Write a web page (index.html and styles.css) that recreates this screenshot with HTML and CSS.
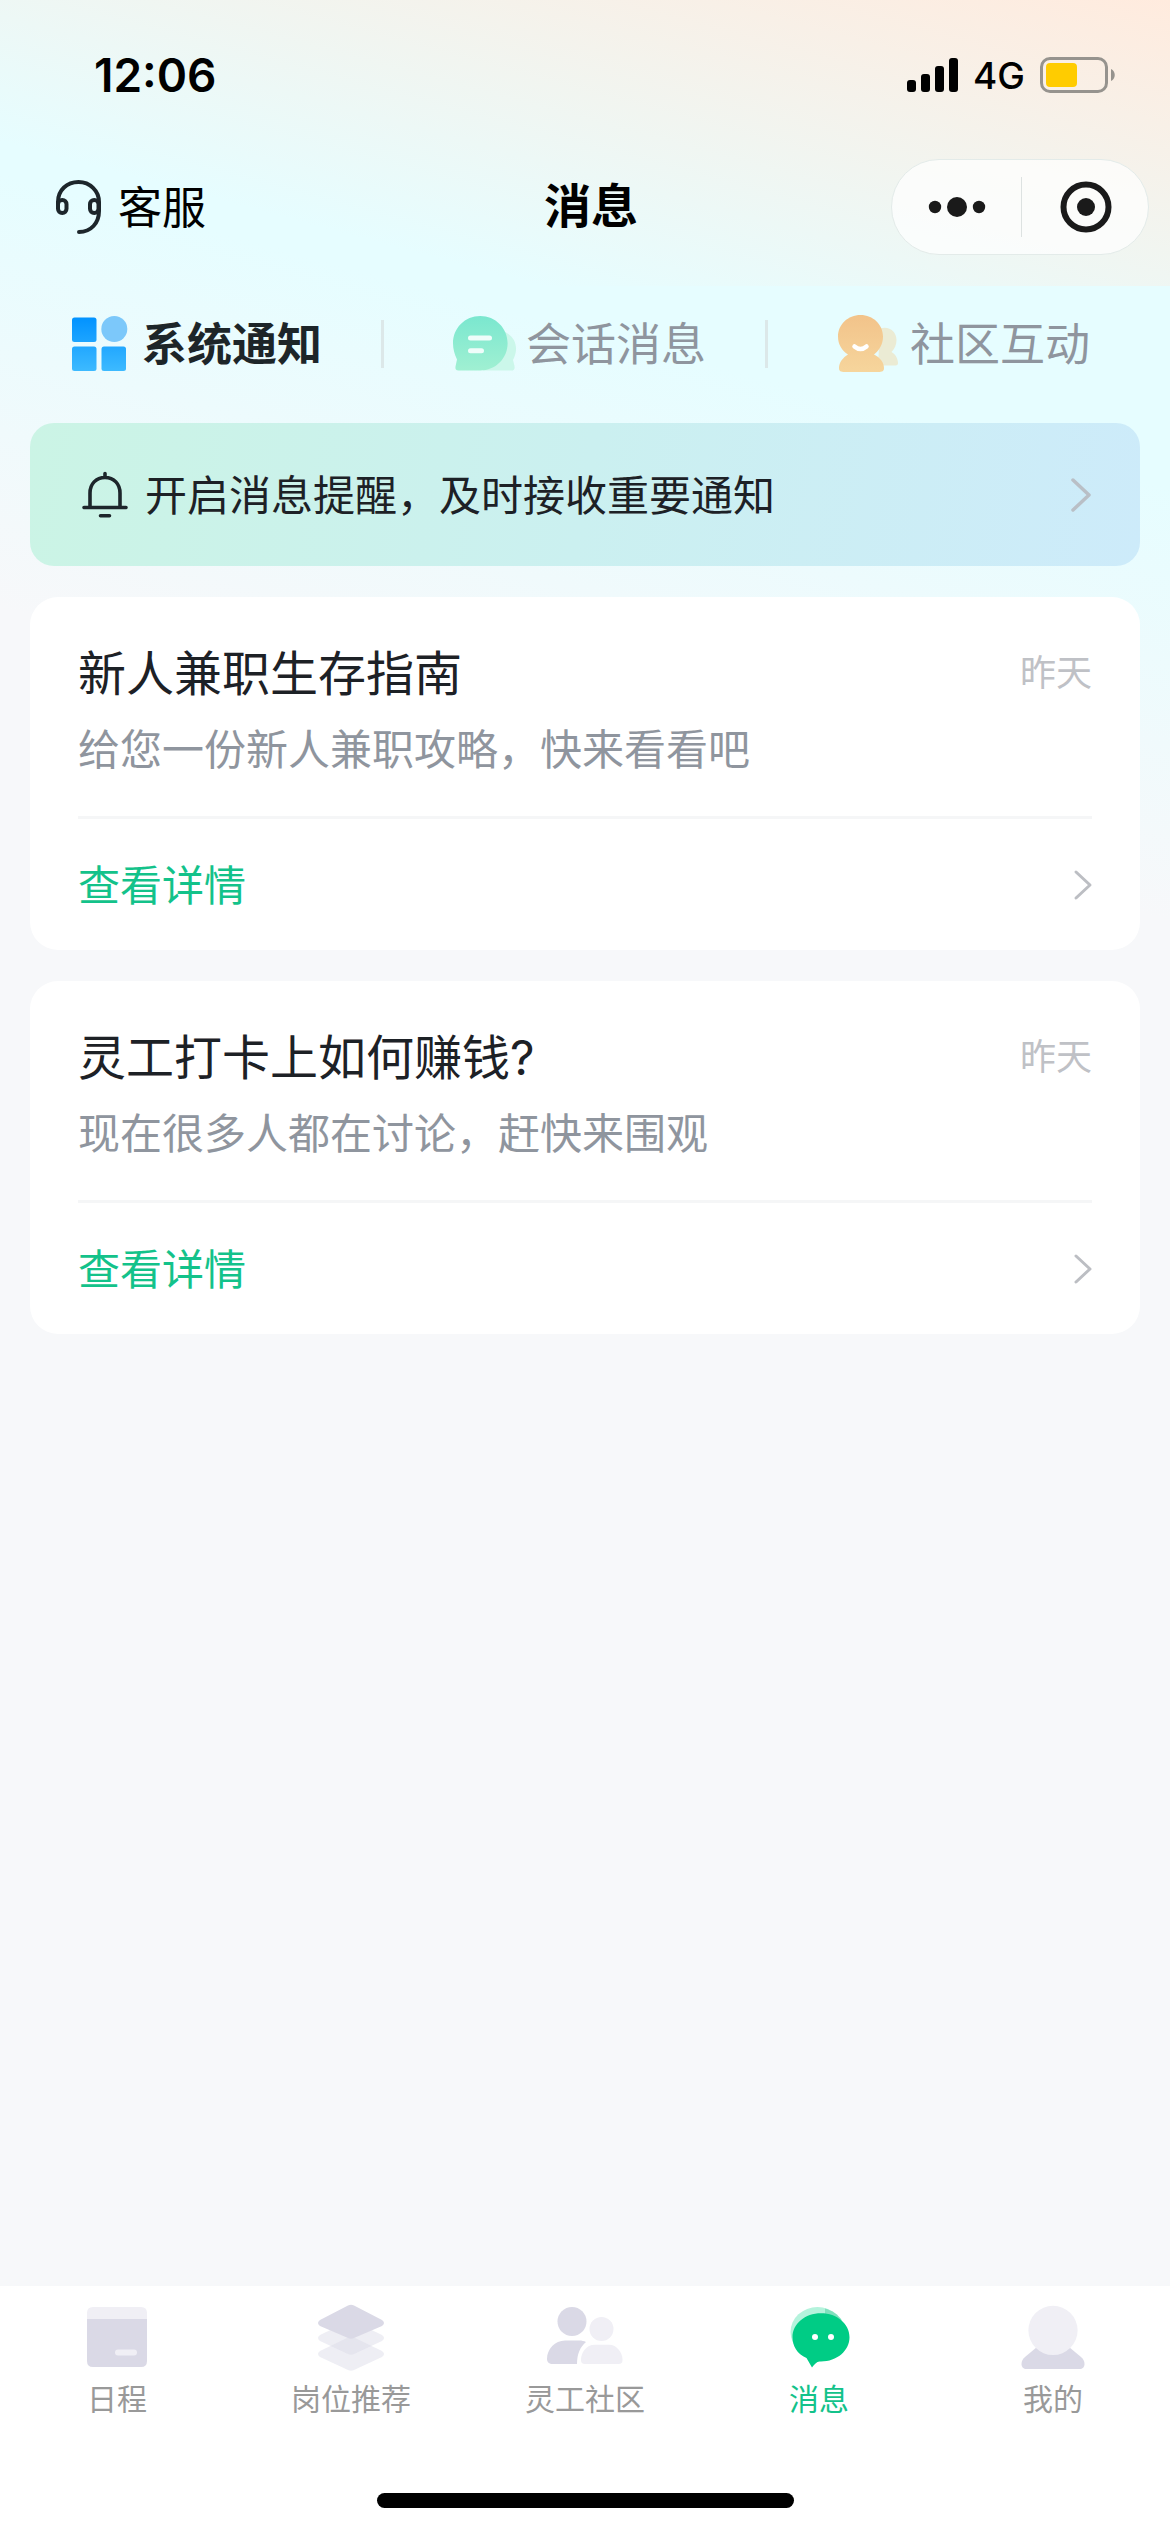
FILE: index.html
```html
<!DOCTYPE html>
<html lang="zh-CN">
<head>
<meta charset="utf-8">
<title>消息</title>
<link rel="stylesheet" href="styles.css">
</head>
<body>
<div class="screen">
  <header class="header">
    <div class="status">
      <span class="time">12:06</span>
      <div class="signals">
        <svg class="bars" width="52" height="34" viewBox="0 0 52 34"><rect x="0" y="22" width="9" height="12" rx="3"/><rect x="14" y="16" width="9" height="18" rx="3"/><rect x="28" y="8" width="9" height="26" rx="3"/><rect x="42" y="0" width="9" height="34" rx="3"/></svg>
        <span class="net">4G</span>
        <svg class="battery" width="76" height="36" viewBox="0 0 76 36"><rect x="1.5" y="1.5" width="65" height="33" rx="8.500" fill="none" stroke="#96938e" stroke-width="3"/><rect x="6" y="6" width="31" height="24" rx="4" fill="#ffcc00"/><path d="M71 12c5 2 5 10 0 12z" fill="#96938e"/></svg>
      </div>
    </div>
    <div class="nav">
      <div class="service">
        <svg width="48" height="56" viewBox="0 0 48 56" fill="none" stroke="#1d262b" stroke-width="4" stroke-linecap="round"><path d="M3 28V23C3 11 12 3 23.500 3S44 12 44 23v9c0 12-8 21-20 21"/><rect x="3" y="21" width="8.500" height="13" rx="4.200"/><rect x="35" y="21" width="8.500" height="13" rx="4.200"/></svg>
        <span>客服</span>
      </div>
      <h1 class="title">消息</h1>
      <div class="capsule">
        <svg class="dots" width="58" height="22" viewBox="0 0 58 22"><circle cx="7" cy="11" r="6.200"/><circle cx="29" cy="11" r="10"/><circle cx="51" cy="11" r="6.200"/></svg>
        <i class="split"></i>
        <svg class="target" width="52" height="52" viewBox="0 0 52 52"><circle cx="26" cy="26" r="22.500" fill="none" stroke="#1a1a1a" stroke-width="6"/><circle cx="26" cy="26" r="9"/></svg>
      </div>
    </div>
  </header>

  <nav class="tabs">
    <div class="tab active">
      <svg width="56" height="55" viewBox="0 0 56 55"><defs><linearGradient id="blue" gradientUnits="userSpaceOnUse" x1="0" y1="0" x2="0" y2="55"><stop stop-color="#0091ff"/><stop offset="1" stop-color="#3dbaff"/></linearGradient></defs><g fill="url(#blue)"><rect x="0" y="1.5" width="24.500" height="24.500" rx="2.500"/><rect x="0" y="30.500" width="24.500" height="24.500" rx="2.500"/><rect x="29.500" y="30.500" width="24.500" height="24.500" rx="2.500"/></g><circle cx="42.300" cy="13" r="13" fill="#7cc8fa"/></svg>
      <span>系统通知</span>
    </div>
    <div class="tab">
      <svg width="64" height="55" viewBox="0 0 64 55"><defs><linearGradient id="mint" x1="0" y1="0" x2="0" y2="1"><stop stop-color="#7ae7cf"/><stop offset="1" stop-color="#a0f0d2"/></linearGradient></defs><path d="M52 16c11 5 14 17 8 28l1.500 6c.5 3-.5 4.500-3 4.500H30z" fill="#cbf7ea"/><path d="M27.300 0c15 0 27.300 12 27.300 27.300S42.500 54.500 27.300 54.500H5.500c-2.500 0-3.500-1.500-3-4l1.500-7C1.500 38 0 33 0 27.300 0 12 12 0 27.300 0z" fill="url(#mint)"/><path d="M17.500 22h19M17.500 34.700h11" stroke="#effdfa" stroke-width="5" stroke-linecap="round"/></svg>
      <span>会话消息</span>
    </div>
    <div class="tab">
      <svg width="61" height="57" viewBox="0 0 61 57"><defs><linearGradient id="sand" gradientUnits="userSpaceOnUse" x1="0" y1="0" x2="0" y2="57"><stop stop-color="#f2c38a"/><stop offset="1" stop-color="#f6d59c"/></linearGradient></defs><path d="M42 13.500c9-3 16.500 3 16.500 11.500 0 5-2 9-5 12 4 2 6.500 7 6.500 11 0 2-1 2.500-4 2.500H40z" fill="#ebebd4"/><path d="M22.500 0C35 0 45 9.500 45 21.500c0 8-4 14-9 18 6 3 10 8 10 13.500 0 3-1.500 4-6 4H7c-4.500 0-6-1-6-4 0-5.500 4-10.500 9-13.500-6-4-10-10-10-18C0 9.500 10 0 22.500 0z" fill="url(#sand)"/><path d="M16.500 31.500q6 5 12 0" fill="none" stroke="#fff" stroke-width="4.500" stroke-linecap="round"/></svg>
      <span>社区互动</span>
    </div>
  </nav>

  <main class="list">
    <section class="banner">
      <svg width="46" height="46" viewBox="0 0 46 46" fill="none" stroke="#1d262b" stroke-width="3.600" stroke-linecap="round"><path d="M23 1.500v4M8 35V21C8 12 14 5.500 23 5.500S38 12 38 21v14M2 35.500h42M18.500 43.800h9"/></svg>
      <span class="banner-text">开启消息提醒，及时接收重要通知</span>
      <svg width="20" height="34" viewBox="0 0 20 34" fill="none" stroke="#b9bfc6" stroke-width="3.500" stroke-linecap="round" stroke-linejoin="round"><path d="M2 2l16 15L2 32"/></svg>
    </section>
    <article class="card">
      <div class="row"><h2>新人兼职生存指南</h2><time>昨天</time></div>
      <p>给您一份新人兼职攻略，快来看看吧</p>
      <a class="more"><span>查看详情</span><svg width="18" height="30" viewBox="0 0 18 30" fill="none" stroke="#bcbec3" stroke-width="3" stroke-linecap="round" stroke-linejoin="round"><path d="M2 2l14 13L2 28"/></svg></a>
    </article>
    <article class="card">
      <div class="row"><h2>灵工打卡上如何赚钱?</h2><time>昨天</time></div>
      <p>现在很多人都在讨论，赶快来围观</p>
      <a class="more"><span>查看详情</span><svg width="18" height="30" viewBox="0 0 18 30" fill="none" stroke="#bcbec3" stroke-width="3" stroke-linecap="round" stroke-linejoin="round"><path d="M2 2l14 13L2 28"/></svg></a>
    </article>
  </main>

  <footer class="tabbar">
    <div class="items">
      <div class="item"><svg width="72" height="72" viewBox="0 0 72 72"><path d="M6 18V11q0-6 6-6h48q6 0 6 6v7z" fill="#f0eff5"/><path d="M6 17h60v42q0 6-6 6H12q-6 0-6-6z" fill="#dad9e6"/><rect x="34" y="47.500" width="22" height="6" rx="3" fill="#f0eff5"/></svg><span>日程</span></div>
      <div class="item"><svg width="72" height="72" viewBox="0 -1 72 72"><g fill="#dad9e6"><path opacity=".45" d="M33 34.500q3-1.500 6 0L67 48q4 3 0 6L39 67q-3 1.500-6 0L5 54q-4-3 0-6z"/><path opacity=".45" d="M33 18.500q3-1.500 6 0L67 32q4 3 0 6L39 51q-3 1.500-6 0L5 38q-4-3 0-6z"/><path d="M33 2.500q3-1.500 6 0L67 17q4 3 0 6L39 35q-3 1.500-6 0L5 23q-4-3 0-6z"/></g></svg><span>岗位推荐</span></div>
      <div class="item"><svg width="76" height="72" viewBox="0 0 76 72"><g fill="#dad9e6"><circle cx="25" cy="19.500" r="14.500"/><path d="M18 38.500h14c3 0 5 .5 7 1.500-6 5-9 12-9 22H6c-4 0-6-2-6-5 0-10 8-18.500 18-18.500z"/></g><g fill="#f0eff5"><circle cx="54.500" cy="27" r="12"/><path d="M48 42.700h14c8 0 13.500 8 13.500 15 0 3-1 4.300-4 4.300H38c-3 0-4-1.300-4-4.300 0-7 5-15 14-15z"/></g></svg><span>灵工社区</span></div>
      <div class="item on"><svg width="72" height="72" viewBox="0 0 72 72"><ellipse cx="34.500" cy="30" rx="27" ry="25" fill="#b4f3dc"/><path d="M42 6.500c7 2 13 6 17 12L42 15z" fill="#7fe0bd"/><path d="M38 11.300c16 0 28.500 10.500 28.500 24S54 59.500 38 59.500c-4 0-5 1-9 6L23.500 56C14 52 9.500 44 9.500 35.300 9.500 21.800 22 11.300 38 11.300z" fill="#00cc85"/><g fill="#fff"><circle cx="32" cy="35" r="3"/><circle cx="48" cy="35" r="3"/></g></svg><span>消息</span></div>
      <div class="item"><svg width="72" height="72" viewBox="0 0 72 72"><path d="M20 45h32l12 10q3.500 3 3.500 7c0 3-2 5-5 5h-53c-3 0-5-2-5-5q0-4 3.500-7z" fill="#dad9e6"/><circle cx="36" cy="28.400" r="24.600" fill="#f0eff5"/></svg><span>我的</span></div>
    </div>
    <div class="home"></div>
  </footer>
</div>
</body>
</html>
```
FILE: styles.css
```css
* { box-sizing: border-box; margin: 0; padding: 0; }
body { font-family: "Noto Sans CJK SC", sans-serif; font-weight: 400; color: #1d2126; }
svg { display: block; flex: none; overflow: visible; }
.screen { width: 1170px; height: 2532px; display: flex; flex-direction: column; background: #f7f8fa linear-gradient(195deg, #e6fdff 0, #e6fdff 470px, #f7f8fa 890px); }
.header { height: 286px; display: flex; flex-direction: column; flex: none; background: linear-gradient(195deg, #ffebde 0, #e6fdff 440px, #e6fdff 470px, #f7f8fa 890px); }
.status { height: 140px; padding: 10px 54px 0 94px; display: flex; align-items: center; justify-content: space-between; }
.time { font: 600 46px/60px Inter, sans-serif; color: #000; }
.signals { display: flex; align-items: center; }
.net { font: 500 37px/44px Inter, sans-serif; color: #000; margin: 2px 15px 0 14px; }
.nav { height: 133px; display: grid; grid-template-columns: 489px 94px 1fr; align-items: center; padding: 0 21px 0 55px; }
.service { display: flex; align-items: center; gap: 15px; font-size: 44px; line-height: 60px; color: #000; }
.service span { padding-bottom: 4px; }
.title { font-size: 47px; line-height: 60px; font-weight: 700; color: #000; padding-bottom: 7px; }
.capsule { justify-self: end; width: 258px; height: 96px; border: 1px solid #e3ebe9; border-radius: 48px; background: rgba(255,255,255,.7); display: flex; align-items: center; fill: #1a1a1a; }
.dots { margin-left: 36px; }
.split { width: 1px; height: 60px; margin: 0 38px 0 35px; background: #dde2e1; }
.tabs { height: 137px; flex: none; display: flex; align-items: center; padding-bottom: 22px; }
.tab { display: flex; align-items: center; font-size: 45px; color: #8f959e; }
.tab span { padding-bottom: 4px; }
.active { font-weight: 700; color: #1d2529; }
.tab:nth-child(1) { width: 381px; padding-left: 72px; gap: 14px; }
.tab:nth-child(2) { width: 384px; gap: 9px; }
.tab:nth-child(3) { width: 405px; gap: 11px; }
.tab + .tab::before { content: ""; width: 3px; height: 48px; background: #dce8e9; }
.tab:nth-child(2)::before { margin-right: 60px; }
.tab:nth-child(3)::before { margin-right: 59px; }
.list { flex: 1; padding: 0 30px; display: flex; flex-direction: column; gap: 31px; }
.banner { height: 143px; border-radius: 24px; background: linear-gradient(100deg, #cbf4e5, #cbf0f0 50%, #cdebfa); display: flex; align-items: center; padding: 0 49px 0 52px; gap: 17px; }
.banner-text { flex: 1; font-size: 42px; padding-bottom: 5px; }
.card { height: 353px; border-radius: 28px; background: #fff; padding: 40px 48px 0; }
.row { display: flex; align-items: center; justify-content: space-between; height: 66px; }
h2 { font-family: Inter, "Noto Sans CJK SC", sans-serif; font-size: 48px; line-height: 66px; font-weight: 400; padding-top: 7px; }
time { font-size: 36px; color: #bfc1c6; }
p { font-size: 42px; line-height: 60px; margin-top: 14px; color: #8f959e; }
.more { display: flex; justify-content: space-between; align-items: center; height: 134px; margin-top: 39px; border-top: 3px solid #f5f6f7; font-size: 42px; color: #13c28a; }
.more span { padding-bottom: 5px; }
.tabbar { height: 246px; background: #fff; flex: none; display: flex; flex-direction: column; }
.items { display: grid; grid-template-columns: repeat(5, 1fr); padding-top: 16px; height: 207px; }
.item { display: flex; flex-direction: column; align-items: center; gap: 3px; font-size: 30px; line-height: 40px; color: #999; }
.on { color: #13c28a; }
.home { width: 417px; height: 15px; border-radius: 8px; background: #000; align-self: center; }
```
